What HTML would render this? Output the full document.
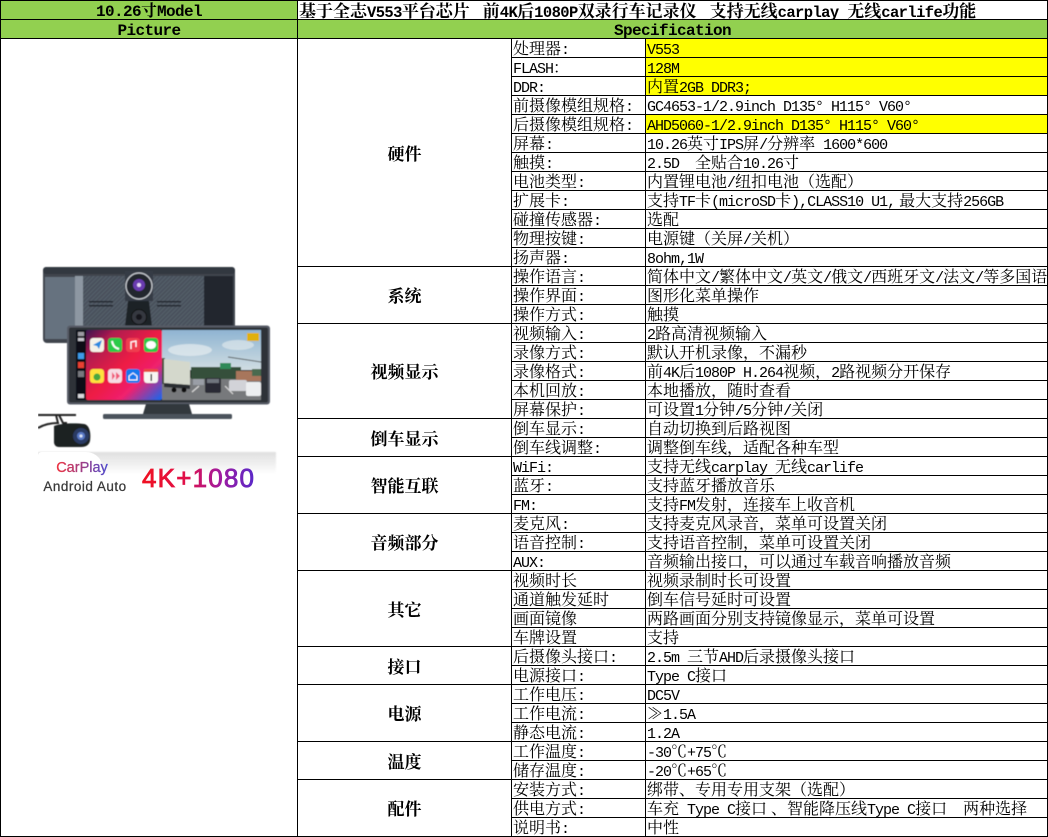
<!DOCTYPE html>
<html lang="zh"><head><meta charset="utf-8"><title>10.26 Model</title>
<style>
html,body{margin:0;padding:0;background:#fff;width:1048px;height:837px;overflow:hidden}
table{position:absolute;left:0;top:0;border-collapse:separate;border-spacing:0;table-layout:fixed;width:1048px;border-top:1px solid #000;border-left:1px solid #000;color:#000;font-family:"Liberation Serif","Noto Serif CJK SC",serif;font-size:16px}
tr{height:19px}
td{box-sizing:border-box;height:19px;padding:10px 0 0 1px;line-height:2px;border-right:1px solid #000;border-bottom:1px solid #000;white-space:nowrap;overflow:hidden;vertical-align:top;font-weight:400}
i{font:normal 15px/2px "Liberation Mono",monospace;letter-spacing:-1px}
.g{background:#92D050;text-align:center;font-weight:700;padding-left:0}
.g i{font:bold 16px/2px "Liberation Mono",monospace;letter-spacing:-.6px}
.t{font-size:17px;font-weight:700;padding-left:1px}
.t i{font:bold 15.5px/2px "Liberation Mono",monospace;letter-spacing:-.6px}
.m{vertical-align:middle;text-align:center;font-weight:700;font-size:17px;padding:4px 0 0;line-height:12px}
.y{background:#FF0}
svg{position:absolute;left:38px;top:264px}
</style></head><body>
<table>
<colgroup><col style="width:297px"><col style="width:214px"><col style="width:134px"><col style="width:402px"></colgroup>
<tr><td class="g"><i>10.26</i>寸<i>Model</i></td><td class="t" colspan="3">基于全志<i>V553</i>平台芯片 <i>&nbsp;</i>前<i>4K</i>后<i>1080P</i>双录行车记录仪 <i>&nbsp;</i>支持无线<i>carplay </i>无线<i>carlife</i>功能</td></tr>
<tr><td class="g"><i>Picture</i></td><td class="g" colspan="3"><i>Specification</i></td></tr>
<tr><td rowspan="42"></td><td class="m" rowspan="12">硬件</td><td>处理器<i>:</i></td><td class="y"><i>V553</i></td></tr>
<tr><td><i>FLASH</i>：</td><td class="y"><i>128M</i></td></tr>
<tr><td><i>DDR:</i></td><td class="y">内置<i>2GB DDR3;</i></td></tr>
<tr><td>前摄像模组规格<i>:</i></td><td><i>GC4653-1/2.9inch D135° H115° V60°</i></td></tr>
<tr><td>后摄像模组规格<i>:</i></td><td class="y"><i>AHD5060-1/2.9inch D135° H115° V60°</i></td></tr>
<tr><td>屏幕<i>:</i></td><td><i>10.26</i>英寸<i>IPS</i>屏<i>/</i>分辨率<i> 1600*600</i></td></tr>
<tr><td>触摸<i>:</i></td><td><i>2.5D&nbsp;&nbsp;</i>全贴合<i>10.26</i>寸</td></tr>
<tr><td>电池类型<i>:</i></td><td>内置锂电池<i>/</i>纽扣电池（选配）</td></tr>
<tr><td>扩展卡<i>:</i></td><td>支持<i>TF</i>卡<i>(microSD</i>卡<i>),CLASS10 U1,</i>&nbsp;最大支持<i>256GB</i></td></tr>
<tr><td>碰撞传感器<i>:</i></td><td>选配</td></tr>
<tr><td>物理按键<i>:</i></td><td>电源键（关屏<i>/</i>关机）</td></tr>
<tr><td>扬声器<i>:</i></td><td><i>8ohm,1W</i></td></tr>
<tr><td class="m" rowspan="3">系统</td><td>操作语言<i>:</i></td><td>简体中文<i>/</i>繁体中文<i>/</i>英文<i>/</i>俄文<i>/</i>西班牙文<i>/</i>法文<i>/</i>等多国语</td></tr>
<tr><td>操作界面<i>:</i></td><td>图形化菜单操作</td></tr>
<tr><td>操作方式<i>:</i></td><td>触摸</td></tr>
<tr><td class="m" rowspan="5">视频显示</td><td>视频输入<i>:</i></td><td><i>2</i>路高清视频输入</td></tr>
<tr><td>录像方式<i>:</i></td><td>默认开机录像，不漏秒</td></tr>
<tr><td>录像格式<i>:</i></td><td>前<i>4K</i>后<i>1080P H.264</i>视频，<i>2</i>路视频分开保存</td></tr>
<tr><td>本机回放<i>:</i></td><td>本地播放，随时查看</td></tr>
<tr><td>屏幕保护<i>:</i></td><td>可设置<i>1</i>分钟<i>/5</i>分钟<i>/</i>关闭</td></tr>
<tr><td class="m" rowspan="2">倒车显示</td><td>倒车显示<i>:</i></td><td>自动切换到后路视图</td></tr>
<tr><td>倒车线调整<i>:</i></td><td>调整倒车线，适配各种车型</td></tr>
<tr><td class="m" rowspan="3">智能互联</td><td><i>WiFi:</i></td><td>支持无线<i>carplay </i>无线<i>carlife</i></td></tr>
<tr><td>蓝牙<i>:</i></td><td>支持蓝牙播放音乐</td></tr>
<tr><td><i>FM:</i></td><td>支持<i>FM</i>发射，连接车上收音机</td></tr>
<tr><td class="m" rowspan="3">音频部分</td><td>麦克风<i>:</i></td><td>支持麦克风录音，菜单可设置关闭</td></tr>
<tr><td>语音控制<i>:</i></td><td>支持语音控制，菜单可设置关闭</td></tr>
<tr><td><i>AUX:</i></td><td>音频输出接口，可以通过车载音响播放音频</td></tr>
<tr><td class="m" rowspan="4">其它</td><td>视频时长</td><td>视频录制时长可设置</td></tr>
<tr><td>通道触发延时</td><td>倒车信号延时可设置</td></tr>
<tr><td>画面镜像</td><td>两路画面分别支持镜像显示，菜单可设置</td></tr>
<tr><td>车牌设置</td><td>支持</td></tr>
<tr><td class="m" rowspan="2">接口</td><td>后摄像头接口<i>:</i></td><td><i>2.5m </i>三节<i>AHD</i>后录摄像头接口</td></tr>
<tr><td>电源接口<i>:</i></td><td><i>Type C</i>接口</td></tr>
<tr><td class="m" rowspan="3">电源</td><td>工作电压<i>:</i></td><td><i>DC5V</i></td></tr>
<tr><td>工作电流<i>:</i></td><td>≫<i>1.5A</i></td></tr>
<tr><td>静态电流<i>:</i></td><td><i>1.2A</i></td></tr>
<tr><td class="m" rowspan="2">温度</td><td>工作温度<i>:</i></td><td><i>-30</i>℃<i>+75</i>℃</td></tr>
<tr><td>储存温度<i>:</i></td><td><i>-20</i>℃<i>+65</i>℃</td></tr>
<tr><td class="m" rowspan="3">配件</td><td>安装方式<i>:</i></td><td>绑带、专用专用支架（选配）</td></tr>
<tr><td>供电方式<i>:</i></td><td>车充<i> Type C</i>接口 、智能降压线<i>Type C</i>接口<i>&nbsp;&nbsp;</i>两种选择</td></tr>
<tr><td>说明书<i>:</i></td><td>中性</td></tr>
</table>
<svg width="240" height="232" viewBox="38 264 240 232" xmlns="http://www.w3.org/2000/svg">
<defs>
<linearGradient id="cp" x1="0" y1="0" x2="1" y2="0"><stop offset="0" stop-color="#f0303c"/><stop offset="1" stop-color="#4a4ad0"/></linearGradient>
<linearGradient id="k" x1="0" y1="0" x2="1" y2="0"><stop offset="0" stop-color="#f01020"/><stop offset=".4" stop-color="#e0104a"/><stop offset=".7" stop-color="#a01aa0"/><stop offset="1" stop-color="#5a28c8"/></linearGradient>
<linearGradient id="wall" x1="0" y1="0" x2="1" y2="1"><stop offset="0" stop-color="#3a1850"/><stop offset=".2" stop-color="#b01a50"/><stop offset=".5" stop-color="#ee1e44"/><stop offset=".72" stop-color="#f0206e"/><stop offset="1" stop-color="#1268f0"/></linearGradient>
<linearGradient id="sky" x1="0" y1="0" x2="0" y2="1"><stop offset="0" stop-color="#8fb4d2"/><stop offset="1" stop-color="#d0dde2"/></linearGradient>
<linearGradient id="band" x1="0" y1="0" x2="0" y2="1"><stop offset="0" stop-color="#dcdcdc"/><stop offset=".5" stop-color="#fff"/></linearGradient>
<pattern id="carbon" width="3" height="3" patternUnits="userSpaceOnUse" patternTransform="rotate(45)"><rect width="3" height="3" fill="#474f5a"/><rect width="1.4" height="3" fill="#555e69"/></pattern>
<filter id="b"><feGaussianBlur stdDeviation=".6"/></filter>
<filter id="b2"><feGaussianBlur stdDeviation=".9"/></filter>
</defs>
<g filter="url(#b)">
<rect x="43" y="267" width="192" height="76" rx="4" fill="#3f454e"/>
<rect x="43" y="267" width="192" height="7" rx="3" fill="#33373f"/>
<rect x="45" y="277" width="30" height="62" fill="#66727f"/>
<rect x="75" y="276" width="8" height="64" fill="#8d97a2"/>
<rect x="83" y="276" width="125" height="50" fill="url(#carbon)"/>
<rect x="204" y="276" width="29" height="62" fill="#24272d"/>
<g fill="#24282e"><rect x="89" y="301" width="24" height="1.5"/><rect x="89" y="305" width="24" height="1.5"/><rect x="157" y="301" width="24" height="1.5"/><rect x="157" y="305" width="24" height="1.5"/></g>
<rect x="125" y="271" width="28" height="30" fill="#363b44"/>
<circle cx="139" cy="286" r="13" fill="#23262d" stroke="#c8ccd2" stroke-width="1.2"/>
<circle cx="139" cy="285" r="6" fill="#6a3ab0"/>
<circle cx="139" cy="285" r="2" fill="#e8d8f8"/>
<path d="M128 301h21l3 25h-27z" fill="#1f2227"/>
<circle cx="139" cy="317" r="7.5" fill="#34383f" stroke="#111" stroke-width="1"/>
<circle cx="139" cy="317" r="3" fill="#15171b"/>
<rect x="67" y="325.5" width="203" height="79" rx="3" fill="#565c66"/>
<rect x="69" y="327.5" width="199" height="75" rx="2" fill="#2d3037"/>
<rect x="76" y="330" width="185" height="70" fill="#0e0f12"/>
<rect x="86" y="330" width="76" height="70" rx="2" fill="url(#wall)"/>
<rect x="162" y="330" width="99" height="40" fill="url(#sky)"/>
<ellipse cx="190" cy="350" rx="22" ry="6" fill="#e6ecef" opacity=".7"/>
<ellipse cx="238" cy="345" rx="16" ry="5" fill="#e6ecef" opacity=".6"/>
<rect x="162" y="378" width="99" height="22" fill="#77797b"/>
<rect x="191" y="367" width="50" height="12" fill="#34503a"/>
<rect x="162" y="358" width="3" height="26" fill="#3d5038"/>
<rect x="236" y="371" width="25" height="10" fill="#a8765c"/>
<rect x="252" y="369" width="9" height="7" fill="#4a6a50"/>
<path d="M164 359l26 3v23l-26-2z" fill="#d4d8cc"/>
<path d="M164 383l26 2v4l-26-2z" fill="#2c2e33"/>
<circle cx="174" cy="390" r="2.5" fill="#111"/><circle cx="184" cy="390" r="2.5" fill="#111"/>
<path d="M192 392l7-6M233 394l-8-8" stroke="#d8d8d8" stroke-width="1.2"/>
<rect x="205" y="378" width="16" height="15" rx="2" fill="#2a2c35"/>
<rect x="207" y="379" width="12" height="4" fill="#70757e"/>
<rect x="229" y="380" width="18" height="11" rx="2" fill="#d2d3d8"/>
<rect x="246" y="382" width="15" height="14" rx="2" fill="#eceef0"/>
<rect x="193" y="379" width="11" height="6" fill="#9a9ea6"/>
<rect x="220" y="363" width="11" height="6" fill="#2e8a58"/>
<path d="M228 357l33 5" stroke="#5a5f60"/>
<rect x="247" y="333" width="12" height="8" fill="#e0b010"/>
<g><rect x="90" y="338" width="14" height="14" rx="3" fill="#f4f2e8"/><path d="M93 345l9-5-3 9-2-3z" fill="#2a8ae0"/>
<rect x="108" y="338" width="14" height="14" rx="3" fill="#2ccb4a"/><path d="M112 341c1 5 3 7 7 8" stroke="#fff" stroke-width="2" fill="none"/>
<rect x="126" y="338" width="14" height="14" rx="3" fill="#f03c50"/><path d="M131 349v-7l5-1v6" stroke="#fff" stroke-width="1.3" fill="none"/>
<rect x="144" y="338" width="14" height="14" rx="3" fill="#2ccb4a"/><ellipse cx="151" cy="345" rx="5" ry="4" fill="#fff"/>
<rect x="90" y="369" width="14" height="14" rx="3" fill="#ffe23c"/><circle cx="97" cy="377" r="3.5" fill="#4aa840"/>
<rect x="108" y="369" width="14" height="14" rx="3" fill="#f6dce4"/><path d="M112 372v8l3-4zM116 372v8l4-4z" fill="#f05a78"/>
<rect x="126" y="369" width="14" height="14" rx="3" fill="#1878ee"/><path d="M129 376l4-3 4 3v4h-8z" fill="none" stroke="#fff"/>
<rect x="144" y="369" width="14" height="14" rx="3" fill="#f8f6f2"/><rect x="144" y="369" width="14" height="3" fill="#e84840"/><rect x="150.5" y="374" width="1.5" height="7" fill="#333"/></g>
<g><rect x="78" y="332" width="6" height="4" fill="#9a9aa2"/><rect x="78" y="338" width="6" height="3" fill="#c4c4cc"/><rect x="78" y="353" width="6" height="6" fill="#3c9ae8"/><rect x="78" y="362" width="6" height="6" fill="#e84030"/><rect x="78" y="371" width="6" height="6" fill="#77787e"/><rect x="78" y="394" width="6" height="4" fill="#d8d8dc"/></g>
<path d="M146 404h43l3 10h-49z" fill="#33373e"/>
<rect x="103" y="414" width="129" height="5" rx="1.5" fill="#4c525b"/>
</g>
<g filter="url(#b)">
<rect x="38" y="414" width="38" height="2" fill="#222"/>
<path d="M38 428c5-3 12-5 20-5l-2-8h3l4 8h4" stroke="#222" stroke-width="2" fill="none"/>
<path d="M54 426c7-3 22-3 30-2 6 1 7 10 6 17-1 4-4 6-9 6h-22c-3 0-5-2-5-5z" fill="#1e2024"/>
<circle cx="81" cy="436" r="8" fill="#2a3a64"/><circle cx="81" cy="436" r="4" fill="#5a7ac8"/><circle cx="81" cy="436" r="1.5" fill="#dfe8f8"/>
</g>
<rect x="38" y="452" width="238" height="44" fill="url(#band)" opacity=".9" filter="url(#b2)"/>
<path d="M38 456c0-2 1-4 4-4h44c8 0 16 6 16 14v30H38z" fill="#fff"/>
<text x="82" y="472" text-anchor="middle" font-family="Liberation Sans,sans-serif" font-size="14.5" fill="url(#cp)" stroke="url(#cp)" stroke-width=".3">CarPlay</text>
<text x="85" y="491" text-anchor="middle" font-family="Liberation Sans,sans-serif" font-size="13.5" letter-spacing=".5" fill="#3a3a3a" stroke="#3a3a3a" stroke-width=".25">Android Auto</text>
<text x="142" y="487" font-family="Liberation Sans,sans-serif" font-size="26" fill="url(#k)" stroke="url(#k)" stroke-width=".8" textLength="112">4K+1080</text>
</svg>
</body></html>
